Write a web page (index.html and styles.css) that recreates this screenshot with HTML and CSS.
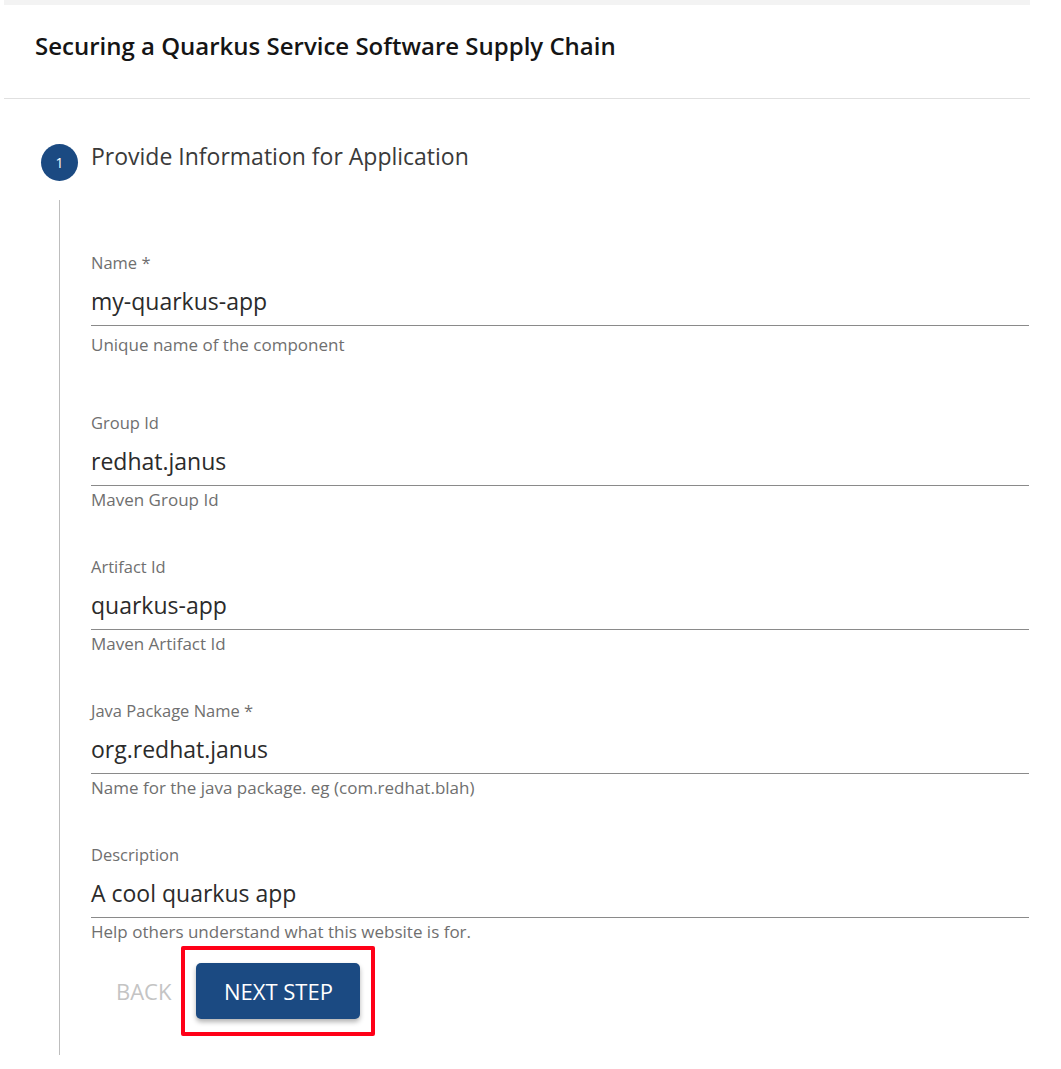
FILE: index.html
```html
<!DOCTYPE html>
<html lang="en">
<head>
<meta charset="utf-8">
<title>Securing a Quarkus Service Software Supply Chain</title>
<link rel="stylesheet" href="styles.css">
</head>
<body>
<div class="page">
  <div class="topband"></div>
  <header class="header">
    <h1 class="title">Securing a Quarkus Service Software Supply Chain</h1>
  </header>
  <section class="stepper">
    <div class="step-head">
      <span class="step-icon">1</span>
      <span class="step-label">Provide Information for Application</span>
    </div>
    <div class="step-body">
      <div class="field field-first">
        <label class="field-label">Name *</label>
        <div class="field-input">my-quarkus-app</div>
        <p class="field-help">Unique name of the component</p>
      </div>
      <div class="field">
        <label class="field-label">Group Id</label>
        <div class="field-input">redhat.janus</div>
        <p class="field-help">Maven Group Id</p>
      </div>
      <div class="field">
        <label class="field-label">Artifact Id</label>
        <div class="field-input">quarkus-app</div>
        <p class="field-help">Maven Artifact Id</p>
      </div>
      <div class="field">
        <label class="field-label">Java Package Name *</label>
        <div class="field-input">org.redhat.janus</div>
        <p class="field-help">Name for the java package. eg (com.redhat.blah)</p>
      </div>
      <div class="field field-last">
        <label class="field-label">Description</label>
        <div class="field-input">A cool quarkus app</div>
        <p class="field-help">Help others understand what this website is for.</p>
      </div>
      <div class="actions">
        <button class="btn-back" type="button">Back</button>
        <div class="highlight">
          <button class="btn-next" type="button">Next Step</button>
        </div>
      </div>
    </div>
  </section>
</div>
</body>
</html>
```

FILE: styles.css
```css
* { box-sizing: border-box; }
html, body { margin: 0; padding: 0; background: #ffffff; }
body {
  font-family: "Open Sans", "Liberation Sans", sans-serif;
  color: rgba(0, 0, 0, 0.87);
}
.page {
  width: 1061px;
  height: 1069px;
  overflow: hidden;
}
.topband {
  height: 5px;
  margin-left: 4px;
  width: 1026px;
  background: #f3f3f3;
}
.header {
  margin-left: 4px;
  width: 1026px;
  height: 94px;
  border-bottom: 1px solid #e0e0e0;
  display: flex;
  align-items: flex-start;
  padding: 26px 0 0 31px;
}
.title {
  margin: 0;
  font-size: 24px;
  line-height: 30px;
  font-weight: 600;
  color: #151515;
}
.stepper {
  padding-left: 41px;
}
.step-head {
  display: flex;
  align-items: flex-start;
  padding-top: 44px;
  height: 101px;
}
.step-icon {
  width: 37px;
  height: 37px;
  margin-top: 1px;
  border-radius: 50%;
  background: #1b4a82;
  color: #fff;
  font-size: 14px;
  line-height: 37px;
  text-align: center;
  flex: none;
}
.step-label {
  margin-left: 13px;
  font-size: 23px;
  line-height: 26px;
  color: #3a3a3a;
}
.step-body {
  margin-left: 18px;
  border-left: 1px solid #bdbdbd;
  padding-left: 31px;
  padding-top: 53px;
  height: 855px;
}
.field {
  width: 938px;
  margin-bottom: 47px;
}
.field-first { margin-bottom: 58px; }
.field-last { margin-bottom: 21px; }
.field-label {
  display: block;
  font-size: 16.5px;
  line-height: 20px;
  color: #6f6f6f;
}
.field-input {
  padding-top: 16px;
  padding-bottom: 12px;
  border-bottom: 1px solid #8a8a8a;
  font-size: 23px;
  line-height: 24px;
  color: #2b2b2b;
}
.field-help {
  margin: 4px 0 0;
  font-size: 17px;
  line-height: 20px;
  color: #6f6f6f;
}
.field-first .field-help { margin-top: 9px; }
.actions {
  display: flex;
  align-items: center;
}
.btn-back {
  border: 0;
  background: none;
  padding: 0;
  margin-left: 25px;
  font-family: inherit;
  font-size: 22px;
  text-transform: uppercase;
  color: #c4c4c4;
}
.highlight {
  margin-left: 10px;
  margin-top: -17px;
  margin-bottom: -17px;
  border: 4px solid #ff0018;
  border-radius: 2px;
  padding: 13px 11px 13px 11px;
}
.btn-next {
  width: 164px;
  height: 56px;
  border: 0;
  border-radius: 5px;
  background: #1b4a82;
  color: #fff;
  font-family: inherit;
  font-size: 22px;
  text-transform: uppercase;
  box-shadow: 0 3px 5px rgba(0, 0, 0, 0.3);
}
```
